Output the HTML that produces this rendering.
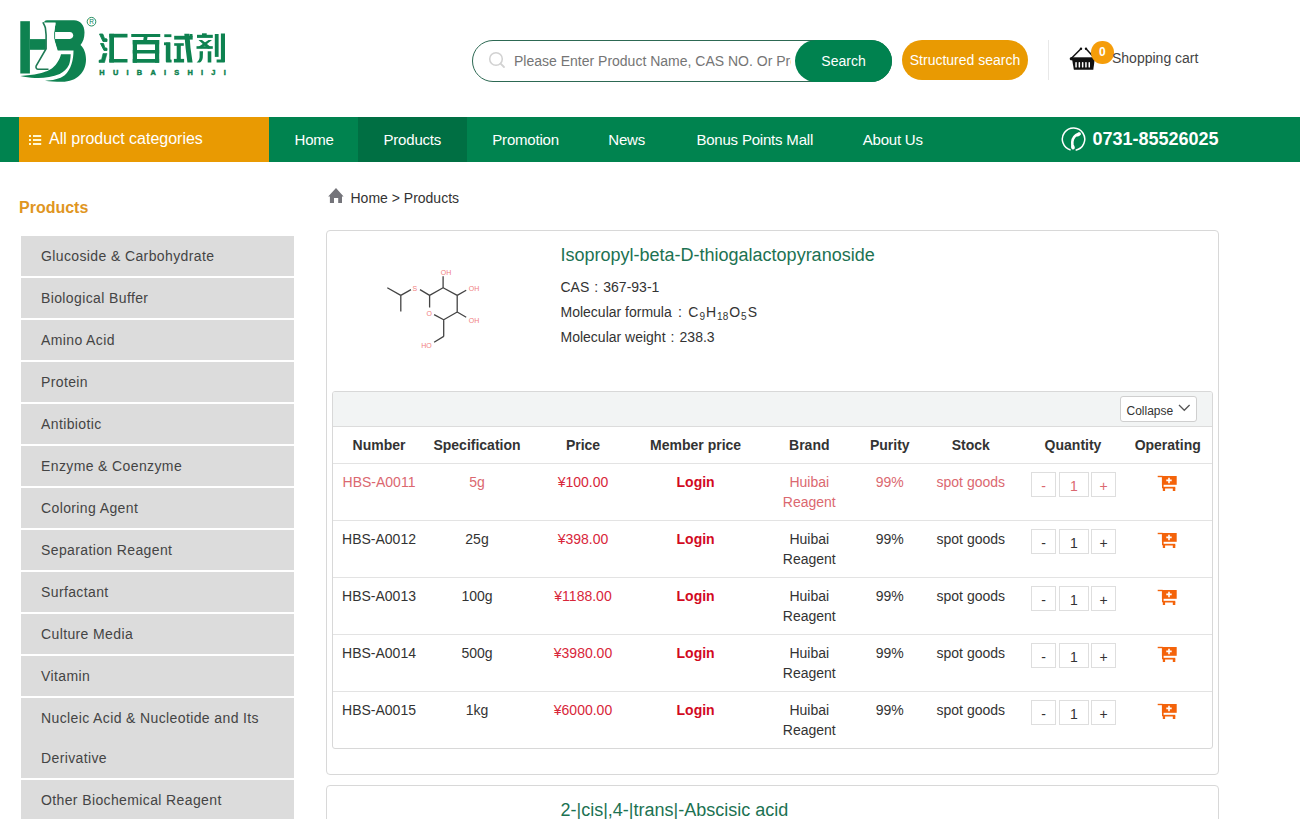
<!DOCTYPE html>
<html><head><meta charset="utf-8"><title>Products</title>
<style>
*{margin:0;padding:0;box-sizing:border-box}
html,body{width:1300px;height:819px;overflow:hidden;background:#fff}
body{position:relative;font-family:"Liberation Sans",sans-serif;color:#333;font-size:14px}
.abs{position:absolute}
.txt{position:absolute;white-space:nowrap;line-height:1}
.side{position:absolute;left:21px;width:273px;background:#dcdcdc;padding-left:20px;line-height:40px;font-size:14px;color:#444;padding-right:10px;letter-spacing:0.38px}
.cell{position:absolute;width:140px;text-align:center;font-size:14px;line-height:20px;color:#333;white-space:nowrap}
.th{font-weight:bold;color:#333}
.hl{color:#db6870}
.price{color:#d8263a}
.login{color:#d20a1f;font-weight:bold}
.qb{position:absolute;height:25px;border:1px solid #dedede;text-align:center;line-height:26px;font-size:14px;color:#333;background:#fff}
.qb.hl{color:#db6870}
.nav a{position:absolute;top:117px;height:45px;line-height:45px;color:#fff;font-size:15px;text-decoration:none;white-space:nowrap;letter-spacing:-0.2px}
</style></head><body>
<svg class="abs" style="left:0;top:0" width="240" height="100" viewBox="0 0 240 100">
<g fill="#0e8250">
<!-- H left bar -->
<rect x="20.3" y="21.2" width="9.6" height="52.3"/>
<!-- H crossbar -->
<rect x="29.9" y="39.1" width="16" height="10.7"/>
<!-- B + swoosh -->
<path d="M47 20.3 L74 20.3 C80.5 20.3 84.5 25.5 84.5 32.5 C84.5 38 83 42 80.5 45 C84 48 86 53.5 86 59.5 C86 72 77 81.8 62 81.8 C55 81.8 50 81.3 45 80.7 C52 80.5 60 79 64.7 75.2 C71 69.5 73.5 60 73.5 50.4 L57.7 50.4 L54.4 40 L54.2 32 L55.6 23.3 L44 23 C44 21.5 45 20.3 47 20.3 Z"/>
</g>
<path d="M54.6 32.1 L69.8 32.1 C72 32.1 73.2 33.8 73.2 35.5 C73.2 37.3 72 38.9 69.8 38.9 L54.6 38.9 Z" fill="#fff"/>
<!-- flask -->
<path d="M43.3 22.5 L55.6 22.5 L54.2 32 L54.4 40 L57.7 52.6 L61 54.2 L58 63 L50 69.3 L37.3 69.3 C36 69.3 35.5 67 36.2 65.8 L46.1 48.7 L46.1 35 L45 27 Z" fill="#fff"/>
<path d="M43 22.3 C43.5 24 45 25.5 45.4 28 L46.1 35 L46.1 48.7 L36.2 65.8 C35.6 67.2 36.2 69.3 37.8 69.3 L48.5 69.3" fill="none" stroke="#1e7a55" stroke-width="1.6"/>
<path d="M61 54.2 L70.7 54.2 C70.5 59 70 62 69 64.7 C67 69 63.5 72 59.7 74 C52 77.5 42 78.3 35 77.9 C30 77.6 25 76.8 20.3 75.9 C27 75.6 33 74.8 39 73.5 C46 72 50 70 53 67.5 C56.5 64.5 60 59 61 54.2 Z" fill="#0e8250"/>
<path d="M54.6 32.1 L54.6 38.9" stroke="#0e8250" stroke-width="0.8"/>
<circle cx="91.5" cy="21.7" r="4.3" fill="none" stroke="#0e8250" stroke-width="0.9"/>
<text x="91.5" y="24.3" font-family="Liberation Sans" font-size="6.5" text-anchor="middle" fill="#0e8250">R</text>
<g fill="#0e8250">
<!-- 汇 -->
<path d="M99.5 34 L102.75 34 L104.5 38.5 L107 39 L107 41.5 L103 41.5 Z" stroke="#0e8250" stroke-width="0.9" stroke-linejoin="round"/>
<path d="M100.5 43.5 L103.5 43.5 L104.8 47.8 L107 48.3 L107 50.5 L104 50.5 Z" stroke="#0e8250" stroke-width="0.9" stroke-linejoin="round"/>
<path d="M103 53.5 L107 53.5 L105.2 60 L104.5 62.5 L99 62.5 L99 60.3 L101.6 59.5 Z" stroke="#0e8250" stroke-width="0.6" stroke-linejoin="round"/>
<rect x="109.3" y="33.8" width="18.2" height="3.7"/>
<rect x="109.3" y="33.8" width="4.7" height="28.7"/>
<rect x="109.3" y="59" width="18.2" height="3.5"/>
<!-- 百 -->
<rect x="131.25" y="34" width="29" height="3"/>
<path d="M143.8 36.5 L147.6 36.5 L147 40.5 L143.2 40.5 Z"/>
<rect x="132.75" y="40" width="4.25" height="22.75"/>
<rect x="155" y="40" width="4.2" height="22.75"/>
<rect x="132.75" y="40" width="26.4" height="4.4"/>
<rect x="132.75" y="50" width="26.4" height="3.5"/>
<rect x="132.75" y="59" width="26.4" height="3.75"/>
<!-- 试 -->
<rect x="164.3" y="34.3" width="7.1" height="2.8"/>
<rect x="164" y="42.4" width="6" height="2.8"/>
<path d="M165.8 42.4 L170.4 42.4 L170.4 59.5 L171.6 59.8 L171.6 62.5 L167 62.5 C166.2 62.5 165.8 62 165.8 61 Z"/>
<rect x="174.2" y="35.8" width="18.5" height="3.8"/>
<path d="M184.3 33.8 L189.4 33.8 L190.5 48 L192.6 62.5 L187.4 62.5 L185.6 48 Z"/>
<rect x="189.7" y="34" width="2.8" height="2.6"/>
<rect x="174.2" y="43.2" width="9.6" height="2.6"/>
<rect x="176.7" y="45" width="4.1" height="14.5"/>
<rect x="173.9" y="58.9" width="10.2" height="3.6"/>
<!-- 剂 -->
<rect x="202" y="33.3" width="4.7" height="2"/>
<rect x="197" y="34.8" width="15.8" height="3.1"/>
<path d="M198.5 39.9 L202 39.9 L212 48 L208 48.8 Z"/>
<path d="M208.5 39.9 L212 39.9 L201.5 48.3 L197.5 47.5 Z"/>
<rect x="196.5" y="46.2" width="16.3" height="2.6"/>
<path d="M199.6 51.3 L203 51.3 L202.8 57.5 C202.5 60 201.5 61.5 200 62.5 L196.6 62.5 C198.6 61 199.5 59 199.6 57 Z"/>
<rect x="207.7" y="51.3" width="3.6" height="11.2"/>
<rect x="214.8" y="34" width="3.8" height="22.9"/>
<path d="M220.9 33.6 L225 33.6 L225 61.5 C225 62.2 224.6 62.5 224 62.5 L216.6 62.5 L216.6 59.4 L220.9 59.4 Z"/>
</g>
<text x="99.3" y="74.6" font-family="Liberation Sans" font-weight="bold" font-size="7.4" fill="#0e8250" stroke="#0e8250" stroke-width="0.45" textLength="126.5" lengthAdjust="spacing">HUIBAISHIJI</text>
</svg>
<!-- search -->
<div class="abs" style="left:472px;top:40px;width:420px;height:42px;border:1px solid #2d6953;border-radius:21px;overflow:hidden">
  <svg class="abs" style="left:15px;top:10px" width="18" height="18" viewBox="0 0 18 18"><circle cx="8" cy="8" r="6.3" fill="none" stroke="#d2d2d2" stroke-width="1.6"/><path d="M12.6 12.6 L16 16" stroke="#d2d2d2" stroke-width="1.8" stroke-linecap="round"/></svg>
  <div class="txt" style="left:41px;top:13px;width:277px;overflow:hidden;font-size:14px;color:#757575">Please Enter Product Name, CAS NO. Or Product Number</div>
</div>
<div class="abs" style="left:795px;top:40px;width:97px;height:42px;background:#00824f;border-radius:21px;color:#fff;font-size:14px;line-height:42px;text-align:center">Search</div>
<div class="abs" style="left:902px;top:40px;width:126px;height:40px;background:#e99a02;border-radius:20px;color:#fff;font-size:14px;line-height:40px;text-align:center">Structured search</div>
<div class="abs" style="left:1048px;top:40px;width:1px;height:40px;background:#e8e8e8"></div>
<svg class="abs" style="left:1068px;top:45px" width="30" height="27" viewBox="0 0 30 27">
<g stroke="#111" stroke-width="1.5" fill="none"><path d="M3.2 13.5 L13 3.8"/><path d="M18 3.8 L26.5 13"/></g>
<g fill="#111"><circle cx="13" cy="3.8" r="1.2"/><circle cx="18" cy="3.8" r="1.2"/><circle cx="3" cy="13.8" r="1.3"/>
<path d="M2.6 12.3 L26.6 12.3 L26.6 15.3 L2.6 15.3 Z"/><path d="M4.2 15 L26.6 15 L25.3 24.7 L5.9 24.7 Z"/></g>
<g fill="#fff"><rect x="7.3" y="17" width="1.5" height="5.6" rx=".7"/><rect x="10.6" y="17" width="1.5" height="5.6" rx=".7"/><rect x="13.9" y="17" width="1.5" height="5.6" rx=".7"/><rect x="17.2" y="17" width="1.5" height="5.6" rx=".7"/><rect x="20.5" y="17" width="1.5" height="5.6" rx=".7"/></g>
</svg>
<div class="abs" style="left:1091px;top:41px;width:22.5px;height:22.5px;border-radius:50%;background:#f59d0a;color:#fff;font-size:12px;font-weight:bold;line-height:22px;text-align:center">0</div>
<div class="txt" style="left:1112px;top:51px;font-size:14px;color:#444">Shopping cart</div>
<!-- nav -->
<div class="abs nav" style="left:0;top:117px;width:1300px;height:45px;background:#00834f"></div>
<div class="abs" style="left:19px;top:117px;width:250px;height:45px;background:#e99a02"></div>
<svg class="abs" style="left:29px;top:134px" width="13" height="12" viewBox="0 0 13 12"><g fill="#fff8d0"><rect x="0" y="1" width="2" height="2"/><rect x="0" y="5" width="2" height="2"/><rect x="0" y="9" width="2" height="2"/><rect x="4" y="1" width="8.2" height="2"/><rect x="4" y="5" width="8.2" height="2"/><rect x="4" y="9" width="8.2" height="2"/></g></svg>
<div class="txt" style="left:49px;top:130.5px;font-size:16px;color:#fff">All product categories</div>
<div class="abs" style="left:358px;top:117px;width:109px;height:45px;background:#006f43"></div>
<div class="nav">
<a style="left:294.5px">Home</a>
<a style="left:383.5px">Products</a>
<a style="left:492.3px">Promotion</a>
<a style="left:608.3px">News</a>
<a style="left:696.4px">Bonus Points Mall</a>
<a style="left:862.7px">About Us</a>
</div>
<svg class="abs" style="left:1061px;top:127px" width="26" height="26" viewBox="0 0 26 26">
<path d="M9.6 23.0 A11.2 11.2 0 1 1 14.64 23.19" fill="none" stroke="#fff" stroke-width="1.5"/>
<path d="M17.8 6.8 C14 8.3 11.6 11.2 11.3 15 C11.1 17.5 11.6 19.5 12.1 20.8" fill="none" stroke="#fff" stroke-width="2.6" stroke-linecap="round"/>
<ellipse cx="17.6" cy="7.4" rx="2.6" ry="1.7" transform="rotate(-35 17.6 7.4)" fill="#fff"/>
<ellipse cx="11.9" cy="20.2" rx="1.8" ry="2.4" transform="rotate(-10 11.9 20.2)" fill="#fff"/>
</svg>
<div class="txt" style="left:1092.5px;top:130px;font-size:18px;font-weight:bold;color:#fff">0731-85526025</div>
<!-- sidebar -->
<div class="txt" style="left:19px;top:200px;font-size:16px;font-weight:bold;color:#e0961f">Products</div>
<div class="side" style="top:236px;height:40px">Glucoside &amp; Carbohydrate</div>
<div class="side" style="top:278px;height:40px">Biological Buffer</div>
<div class="side" style="top:320px;height:40px">Amino Acid</div>
<div class="side" style="top:362px;height:40px">Protein</div>
<div class="side" style="top:404px;height:40px">Antibiotic</div>
<div class="side" style="top:446px;height:40px">Enzyme &amp; Coenzyme</div>
<div class="side" style="top:488px;height:40px">Coloring Agent</div>
<div class="side" style="top:530px;height:40px">Separation Reagent</div>
<div class="side" style="top:572px;height:40px">Surfactant</div>
<div class="side" style="top:614px;height:40px">Culture Media</div>
<div class="side" style="top:656px;height:40px">Vitamin</div>
<div class="side" style="top:698px;height:80px">Nucleic Acid &amp; Nucleotide and Its Derivative</div>
<div class="side" style="top:780px;height:40px">Other Biochemical Reagent</div>
<!-- breadcrumb -->
<svg class="abs" style="left:328px;top:187px" width="17" height="17" viewBox="0 0 17 17">
<path d="M8 1 L15.6 9.6 L14 9.6 L14 16 L10.2 16 L10.2 10.9 L6 10.9 L6 16 L1.9 16 L1.9 9.6 L0.2 9.6 Z" fill="#74747a"/>
</svg>
<div class="txt" style="left:350.5px;top:190.5px;font-size:14px;color:#333">Home &gt; Products</div>
<!-- card 1 -->
<div class="abs" style="left:326px;top:230px;width:893px;height:545px;border:1px solid #d8d8d8;border-radius:4px"></div>
<svg class="abs" style="left:370px;top:255px" width="120" height="100" viewBox="0 0 120 100">
<path d="M17.3 32.7 L30.8 40.4 M30.8 40.4 L30.8 56.4 M30.8 40.4 L41.0 34.6 M50.0 34.6 L59.6 40.4 M59.6 40.4 L59.6 52.6 M64.1 59.6 L73.7 64.7 M59.6 40.4 L73.1 32.7 M73.1 32.7 L87.2 40.4 M87.2 40.4 L87.2 57.0 M87.2 57.0 L73.7 64.7 M73.1 32.7 L73.1 21.2 M87.2 40.4 L96.2 35.3 M87.2 57.0 L96.2 62.2 M73.7 64.7 L73.7 81.4 M73.7 81.4 L64.1 87.2" stroke="#444" stroke-width="1.3" fill="none"/>
<g font-family="Liberation Sans" font-size="7" fill="#f08080"><text x="44.9" y="36.0" text-anchor="middle">S</text><text x="59.3" y="60.5" text-anchor="middle">O</text><text x="76.0" y="19.5" text-anchor="middle">OH</text><text x="104.0" y="36.0" text-anchor="middle">OH</text><text x="104.0" y="68.0" text-anchor="middle">OH</text><text x="56.5" y="93.0" text-anchor="middle">HO</text></g>
</svg>
<div class="txt" style="left:560.5px;top:245.5px;font-size:18px;color:#1c7252">Isopropyl-beta-D-thiogalactopyranoside</div>
<div class="txt" style="left:560.5px;top:280px;font-size:14px;color:#333">CAS<span style="display:inline-block;width:14px;text-align:center">:</span>367-93-1</div>
<div class="txt" style="left:560.5px;top:305px;font-size:14px;color:#333">Molecular formula<span style="display:inline-block;width:16.5px;text-align:center">:</span>C<sub style="font-size:10px;vertical-align:-3px;margin:0 1px">9</sub>H<sub style="font-size:10px;vertical-align:-3px;margin:0 1px">18</sub>O<sub style="font-size:10px;vertical-align:-3px;margin:0 1px">5</sub>S</div>
<div class="txt" style="left:560.5px;top:330px;font-size:14px;color:#333">Molecular weight<span style="display:inline-block;width:14px;text-align:center">:</span>238.3</div>
<!-- inner table -->
<div class="abs" style="left:332px;top:391px;width:881px;height:358px;border:1px solid #d8d8d8;border-radius:3px;overflow:hidden">
  <div class="abs" style="left:0;top:0;width:879px;height:35px;background:#f2f4f4;border-bottom:1px solid #dcdcdc"></div>
  <div class="abs" style="left:0;top:71px;width:879px;height:1px;background:#e3e3e3"></div>
</div>
<div class="abs" style="left:1120px;top:396px;width:77px;height:26px;border:1px solid #cfcfcf;border-radius:3px;background:#fff"></div>
<div class="txt" style="left:1126.5px;top:405px;font-size:12px;color:#333">Collapse</div>
<svg class="abs" style="left:1178px;top:404px" width="13" height="8" viewBox="0 0 13 8"><path d="M1 1 L6.3 6.3 L11.6 1" fill="none" stroke="#555" stroke-width="1.3"/></svg>
<div class="cell th" style="left:309.0px;top:435px">Number</div>
<div class="cell th" style="left:407.0px;top:435px">Specification</div>
<div class="cell th" style="left:513.0px;top:435px">Price</div>
<div class="cell th" style="left:625.6px;top:435px">Member price</div>
<div class="cell th" style="left:739.3px;top:435px">Brand</div>
<div class="cell th" style="left:819.8px;top:435px">Purity</div>
<div class="cell th" style="left:900.8px;top:435px">Stock</div>
<div class="cell th" style="left:1003.0px;top:435px">Quantity</div>
<div class="cell th" style="left:1097.7px;top:435px">Operating</div>
<div class="cell  hl" style="left:309.0px;top:472px">HBS-A0011</div>
<div class="cell  hl" style="left:407.0px;top:472px">5g</div>
<div class="cell price" style="left:513.0px;top:472px">¥100.00</div>
<div class="cell login" style="left:625.6px;top:472px">Login</div>
<div class="cell  hl" style="left:739.3px;top:472px">Huibai<br>Reagent</div>
<div class="cell  hl" style="left:819.8px;top:472px">99%</div>
<div class="cell  hl" style="left:900.8px;top:472px">spot goods</div>
<div class="qb hl" style="left:1031px;top:472px;width:25px">-</div>
<div class="qb hl" style="left:1059px;top:472px;width:30px">1</div>
<div class="qb hl" style="left:1091px;top:472px;width:25px">+</div>
<svg class="abs" style="left:1157px;top:474px" width="22" height="18" viewBox="0 0 22 18">
<g fill="#f4630a">
<rect x="0.7" y="1.8" width="5" height="1.4"/>
<rect x="4.9" y="2" width="14.8" height="8.8"/>
<rect x="5" y="2" width="1.6" height="12"/>
<rect x="5.5" y="12.8" width="12.8" height="1.7"/>
<rect x="5.8" y="14" width="2.3" height="3"/>
<rect x="15.8" y="14" width="2.5" height="3"/>
</g>
<path d="M11.2 3.8 L12.8 3.8 L12.8 5.6 L14.7 5.6 L14.7 7.2 L12.8 7.2 L12.8 9.2 L11.2 9.2 L11.2 7.2 L9.3 7.2 L9.3 5.6 L11.2 5.6 Z" fill="#fff"/>
</svg>
<div class="abs" style="left:333px;top:520px;width:879px;height:1px;background:#e3e3e3"></div>
<div class="cell " style="left:309.0px;top:529px">HBS-A0012</div>
<div class="cell " style="left:407.0px;top:529px">25g</div>
<div class="cell price" style="left:513.0px;top:529px">¥398.00</div>
<div class="cell login" style="left:625.6px;top:529px">Login</div>
<div class="cell " style="left:739.3px;top:529px">Huibai<br>Reagent</div>
<div class="cell " style="left:819.8px;top:529px">99%</div>
<div class="cell " style="left:900.8px;top:529px">spot goods</div>
<div class="qb" style="left:1031px;top:529px;width:25px">-</div>
<div class="qb" style="left:1059px;top:529px;width:30px">1</div>
<div class="qb" style="left:1091px;top:529px;width:25px">+</div>
<svg class="abs" style="left:1157px;top:531px" width="22" height="18" viewBox="0 0 22 18">
<g fill="#f4630a">
<rect x="0.7" y="1.8" width="5" height="1.4"/>
<rect x="4.9" y="2" width="14.8" height="8.8"/>
<rect x="5" y="2" width="1.6" height="12"/>
<rect x="5.5" y="12.8" width="12.8" height="1.7"/>
<rect x="5.8" y="14" width="2.3" height="3"/>
<rect x="15.8" y="14" width="2.5" height="3"/>
</g>
<path d="M11.2 3.8 L12.8 3.8 L12.8 5.6 L14.7 5.6 L14.7 7.2 L12.8 7.2 L12.8 9.2 L11.2 9.2 L11.2 7.2 L9.3 7.2 L9.3 5.6 L11.2 5.6 Z" fill="#fff"/>
</svg>
<div class="abs" style="left:333px;top:577px;width:879px;height:1px;background:#e3e3e3"></div>
<div class="cell " style="left:309.0px;top:586px">HBS-A0013</div>
<div class="cell " style="left:407.0px;top:586px">100g</div>
<div class="cell price" style="left:513.0px;top:586px">¥1188.00</div>
<div class="cell login" style="left:625.6px;top:586px">Login</div>
<div class="cell " style="left:739.3px;top:586px">Huibai<br>Reagent</div>
<div class="cell " style="left:819.8px;top:586px">99%</div>
<div class="cell " style="left:900.8px;top:586px">spot goods</div>
<div class="qb" style="left:1031px;top:586px;width:25px">-</div>
<div class="qb" style="left:1059px;top:586px;width:30px">1</div>
<div class="qb" style="left:1091px;top:586px;width:25px">+</div>
<svg class="abs" style="left:1157px;top:588px" width="22" height="18" viewBox="0 0 22 18">
<g fill="#f4630a">
<rect x="0.7" y="1.8" width="5" height="1.4"/>
<rect x="4.9" y="2" width="14.8" height="8.8"/>
<rect x="5" y="2" width="1.6" height="12"/>
<rect x="5.5" y="12.8" width="12.8" height="1.7"/>
<rect x="5.8" y="14" width="2.3" height="3"/>
<rect x="15.8" y="14" width="2.5" height="3"/>
</g>
<path d="M11.2 3.8 L12.8 3.8 L12.8 5.6 L14.7 5.6 L14.7 7.2 L12.8 7.2 L12.8 9.2 L11.2 9.2 L11.2 7.2 L9.3 7.2 L9.3 5.6 L11.2 5.6 Z" fill="#fff"/>
</svg>
<div class="abs" style="left:333px;top:634px;width:879px;height:1px;background:#e3e3e3"></div>
<div class="cell " style="left:309.0px;top:643px">HBS-A0014</div>
<div class="cell " style="left:407.0px;top:643px">500g</div>
<div class="cell price" style="left:513.0px;top:643px">¥3980.00</div>
<div class="cell login" style="left:625.6px;top:643px">Login</div>
<div class="cell " style="left:739.3px;top:643px">Huibai<br>Reagent</div>
<div class="cell " style="left:819.8px;top:643px">99%</div>
<div class="cell " style="left:900.8px;top:643px">spot goods</div>
<div class="qb" style="left:1031px;top:643px;width:25px">-</div>
<div class="qb" style="left:1059px;top:643px;width:30px">1</div>
<div class="qb" style="left:1091px;top:643px;width:25px">+</div>
<svg class="abs" style="left:1157px;top:645px" width="22" height="18" viewBox="0 0 22 18">
<g fill="#f4630a">
<rect x="0.7" y="1.8" width="5" height="1.4"/>
<rect x="4.9" y="2" width="14.8" height="8.8"/>
<rect x="5" y="2" width="1.6" height="12"/>
<rect x="5.5" y="12.8" width="12.8" height="1.7"/>
<rect x="5.8" y="14" width="2.3" height="3"/>
<rect x="15.8" y="14" width="2.5" height="3"/>
</g>
<path d="M11.2 3.8 L12.8 3.8 L12.8 5.6 L14.7 5.6 L14.7 7.2 L12.8 7.2 L12.8 9.2 L11.2 9.2 L11.2 7.2 L9.3 7.2 L9.3 5.6 L11.2 5.6 Z" fill="#fff"/>
</svg>
<div class="abs" style="left:333px;top:691px;width:879px;height:1px;background:#e3e3e3"></div>
<div class="cell " style="left:309.0px;top:700px">HBS-A0015</div>
<div class="cell " style="left:407.0px;top:700px">1kg</div>
<div class="cell price" style="left:513.0px;top:700px">¥6000.00</div>
<div class="cell login" style="left:625.6px;top:700px">Login</div>
<div class="cell " style="left:739.3px;top:700px">Huibai<br>Reagent</div>
<div class="cell " style="left:819.8px;top:700px">99%</div>
<div class="cell " style="left:900.8px;top:700px">spot goods</div>
<div class="qb" style="left:1031px;top:700px;width:25px">-</div>
<div class="qb" style="left:1059px;top:700px;width:30px">1</div>
<div class="qb" style="left:1091px;top:700px;width:25px">+</div>
<svg class="abs" style="left:1157px;top:702px" width="22" height="18" viewBox="0 0 22 18">
<g fill="#f4630a">
<rect x="0.7" y="1.8" width="5" height="1.4"/>
<rect x="4.9" y="2" width="14.8" height="8.8"/>
<rect x="5" y="2" width="1.6" height="12"/>
<rect x="5.5" y="12.8" width="12.8" height="1.7"/>
<rect x="5.8" y="14" width="2.3" height="3"/>
<rect x="15.8" y="14" width="2.5" height="3"/>
</g>
<path d="M11.2 3.8 L12.8 3.8 L12.8 5.6 L14.7 5.6 L14.7 7.2 L12.8 7.2 L12.8 9.2 L11.2 9.2 L11.2 7.2 L9.3 7.2 L9.3 5.6 L11.2 5.6 Z" fill="#fff"/>
</svg>
<!-- card 2 -->
<div class="abs" style="left:326px;top:785px;width:893px;height:100px;border:1px solid #d8d8d8;border-radius:4px"></div>
<div class="txt" style="left:560.5px;top:800.5px;font-size:18px;color:#1c7252">2-|cis|,4-|trans|-Abscisic acid</div>
</body></html>
